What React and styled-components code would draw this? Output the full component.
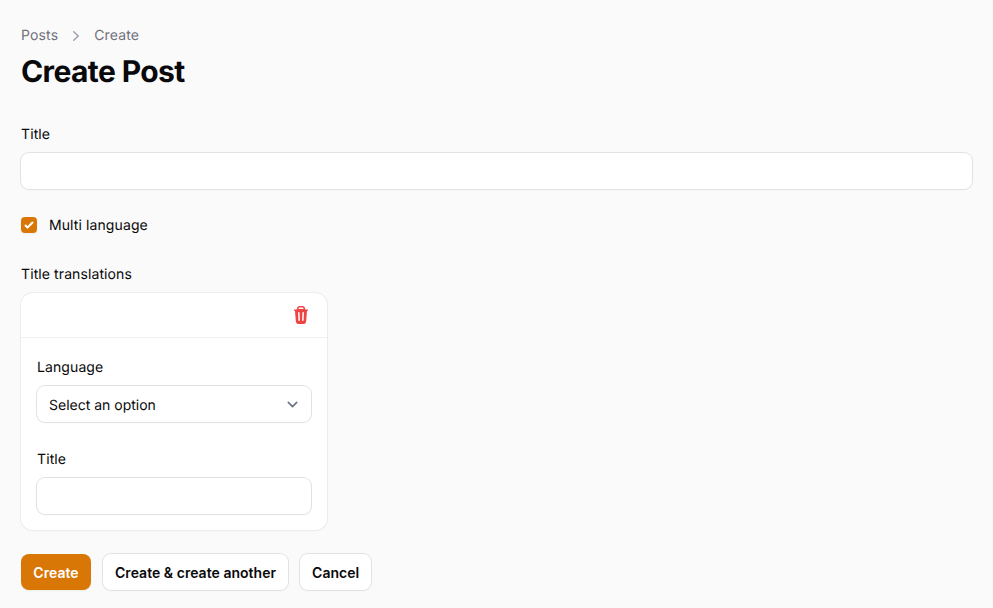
import React from 'react'
import styled, { createGlobalStyle } from 'styled-components'

const GlobalStyle = createGlobalStyle`
  html, body {
    margin: 0;
    padding: 0;
    background: #fafafa;
    font-family: Inter, "Liberation Sans", sans-serif;
    color: #09090b;
    text-rendering: geometricPrecision;
  }
  * {
    box-sizing: border-box;
  }
`

const ChevronRight = () => (
  <Chevron viewBox="0 0 20 20" fill="currentColor">
    <path fillRule="evenodd" clipRule="evenodd" d="M7.21 14.77a.75.75 0 01.02-1.06L11.168 10 7.23 6.29a.75.75 0 111.04-1.08l4.5 4.25a.75.75 0 010 1.08l-4.5 4.25a.75.75 0 01-1.06-.02z" />
  </Chevron>
)

const TrashIcon = () => (
  <Trash viewBox="0 0 20 20" fill="currentColor">
    <path fillRule="evenodd" clipRule="evenodd" d="M8.75 1A2.75 2.75 0 006 3.75v.443c-.795.077-1.584.176-2.365.298a.75.75 0 10.23 1.482l.149-.022.841 10.518A2.75 2.75 0 007.596 19h4.807a2.75 2.75 0 002.742-2.53l.841-10.52.149.023a.75.75 0 00.23-1.482A41.03 41.03 0 0014 4.193V3.75A2.75 2.75 0 0011.25 1h-2.5zM10 4c.84 0 1.673.025 2.5.075V3.75c0-.69-.56-1.25-1.25-1.25h-2.5c-.69 0-1.25.56-1.25 1.25v.325C8.327 4.025 9.16 4 10 4zM8.58 7.72a.75.75 0 00-1.5.06l.3 7.5a.75.75 0 101.5-.06l-.3-7.5zm4.34.06a.75.75 0 10-1.5-.06l-.3 7.5a.75.75 0 101.5.06l.3-7.5z" />
  </Trash>
)

const App = () => {
  return (
    <Page>
      <GlobalStyle />
      <Breadcrumbs>
        <span>Posts</span>
        <ChevronRight />
        <span>Create</span>
      </Breadcrumbs>
      <Heading>Create Post</Heading>
      <Form>
        <Field>
          <Label>Title</Label>
          <Input type="text" />
        </Field>
        <CheckRow>
          <CheckBox>
            <svg viewBox="0 0 16 16" width="16" height="16" fill="white">
              <path d="M12.207 4.793a1 1 0 010 1.414l-5 5a1 1 0 01-1.414 0l-2-2a1 1 0 011.414-1.414L6.5 9.086l4.293-4.293a1 1 0 011.414 0z" />
            </svg>
          </CheckBox>
          <Label>Multi language</Label>
        </CheckRow>
        <Field>
          <Label>Title translations</Label>
          <Card>
            <CardHeader>
              <TrashIcon />
            </CardHeader>
            <CardBody>
              <Field>
                <Label>Language</Label>
                <SelectBox>
                  <SelectText>Select an option</SelectText>
                  <svg viewBox="0 0 20 20" width="21" height="21" fill="none" stroke="#6b7280" strokeWidth="1.5" strokeLinecap="round" strokeLinejoin="round">
                    <path d="M6 8l4 4 4-4" />
                  </svg>
                </SelectBox>
              </Field>
              <Field>
                <Label>Title</Label>
                <Input type="text" />
              </Field>
            </CardBody>
          </Card>
        </Field>
      </Form>
      <Actions>
        <Button $primary>Create</Button>
        <Button>Create &amp; create another</Button>
        <Button>Cancel</Button>
      </Actions>
    </Page>
  )
}

const Page = styled.div`
  padding: 26px 21px 16px;
`
const Breadcrumbs = styled.nav`
  display: flex;
  align-items: center;
  gap: 8px;
  height: 20px;
  font-size: 14px;
  line-height: 20px;
  font-weight: 400;
  letter-spacing: 0.15px;
  color: #71717a;
`
const Chevron = styled.svg`
  width: 20px;
  height: 20px;
  color: #a1a1aa;
`
const Heading = styled.h1`
  margin: 8px 0 0;
  font-size: 30px;
  line-height: 36px;
  font-weight: 700;
  letter-spacing: -0.6px;
  color: #09090b;
`
const Form = styled.div`
  display: flex;
  flex-direction: column;
  gap: 26px;
  margin-top: 34px;
`
const Field = styled.div`
  display: flex;
  flex-direction: column;
  gap: 8px;
`
const Label = styled.label`
  padding-top: 1px;
  font-size: 14px;
  line-height: 20px;
  font-weight: 400;
  letter-spacing: 0.1px;
  color: #09090b;
`
const Input = styled.input`
  display: block;
  width: 100%;
  height: 36px;
  background: #fff;
  border: 0;
  border-radius: 8px;
  box-shadow: 0 0 0 1px #e2e2e4, 0 1px 2px rgba(0, 0, 0, 0.05);
  outline: none;
`
const CheckRow = styled.div`
  display: flex;
  align-items: flex-start;
  gap: 12px;
  margin-bottom: 2px;
`
const CheckBox = styled.span`
  display: flex;
  width: 16px;
  height: 16px;
  margin-top: 2px;
  border-radius: 4px;
  background: #d97706;
  box-shadow: 0 1px 2px rgba(0, 0, 0, 0.05);
`
const Card = styled.div`
  width: 306px;
  background: #fff;
  border-radius: 12px;
  box-shadow: 0 0 0 1px #ececee, 0 1px 2px rgba(0, 0, 0, 0.05);
`
const CardHeader = styled.div`
  display: flex;
  justify-content: flex-end;
  align-items: center;
  height: 45px;
  padding: 0 16px;
  border-bottom: 1px solid #f1f1f2;
`
const Trash = styled.svg`
  width: 20px;
  height: 20px;
  color: #ef4444;
`
const CardBody = styled.div`
  display: flex;
  flex-direction: column;
  gap: 27px;
  padding: 19px 16px 16px;
`
const SelectBox = styled.div`
  display: flex;
  align-items: center;
  justify-content: space-between;
  height: 36px;
  padding: 0 8px 0 12px;
  font-size: 14px;
  line-height: 20px;
  color: #09090b;
  background: #fff;
  border-radius: 8px;
  box-shadow: 0 0 0 1px #e2e2e4, 0 1px 2px rgba(0, 0, 0, 0.05);
`
const SelectText = styled.span`
  padding-top: 4px;
`
const Actions = styled.div`
  display: flex;
  gap: 12px;
  margin-top: 24px;
`
const Button = styled.button`
  width: ${(p) => (p.$primary ? '70px' : 'auto')};
  height: 36px;
  padding: 2px 12px 0;
  font-family: inherit;
  font-size: 14px;
  line-height: 20px;
  font-weight: 600;
  letter-spacing: 0.03px;
  border: 0;
  border-radius: 8px;
  color: ${(p) => (p.$primary ? '#fff' : '#09090b')};
  background: ${(p) => (p.$primary ? '#d97706' : '#fff')};
  box-shadow: ${(p) => (p.$primary ? '0 1px 2px rgba(0, 0, 0, 0.05)' : '0 0 0 1px #e2e2e4, 0 1px 2px rgba(0, 0, 0, 0.05)')};
`

export default App
